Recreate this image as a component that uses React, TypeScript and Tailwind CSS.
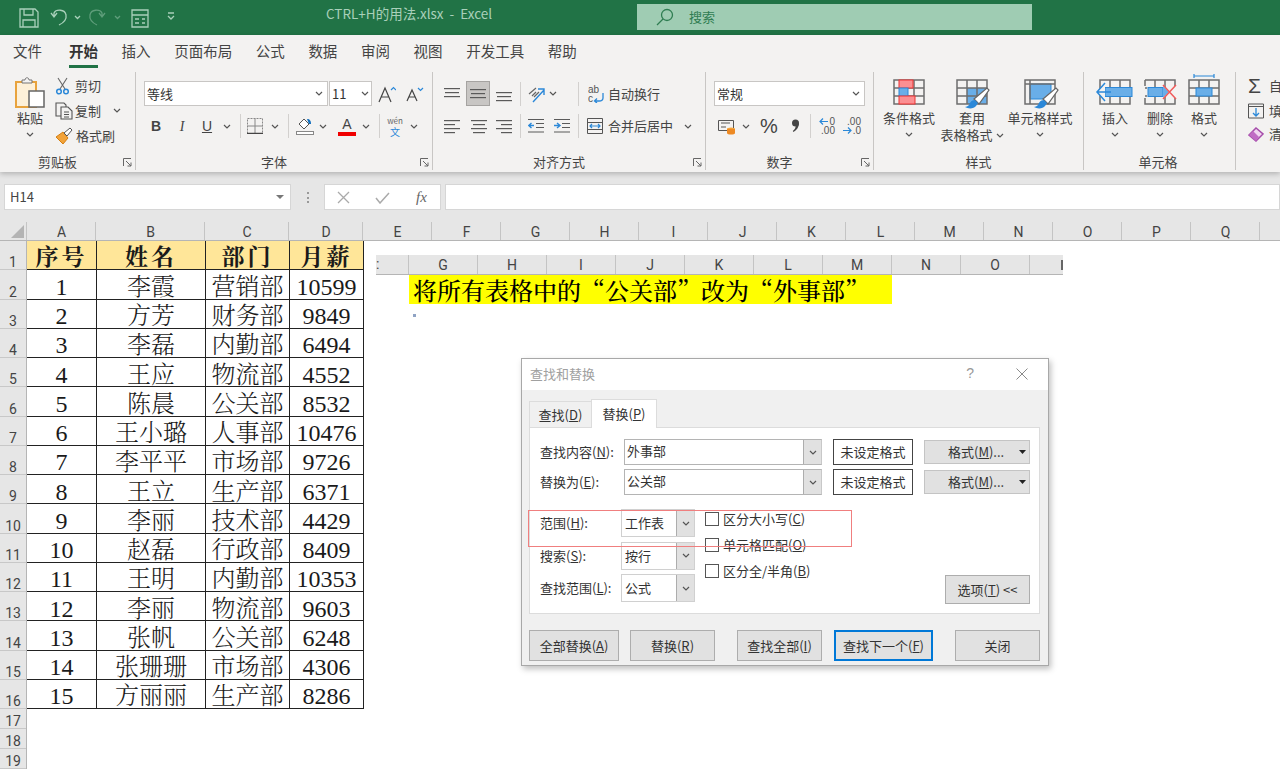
import React from 'react';

const tabs = ['开始', '插入', '页面布局', '公式', '数据', '审阅', '视图', '开发工具', '帮助'];

const people = [
  ['1', '李霞', '营销部', '10599'],
  ['2', '方芳', '财务部', '9849'],
  ['3', '李磊', '内勤部', '6494'],
  ['4', '王应', '物流部', '4552'],
  ['5', '陈晨', '公关部', '8532'],
  ['6', '王小璐', '人事部', '10476'],
  ['7', '李平平', '市场部', '9726'],
  ['8', '王立', '生产部', '6371'],
  ['9', '李丽', '技术部', '4429'],
  ['10', '赵磊', '行政部', '8409'],
  ['11', '王明', '内勤部', '10353'],
  ['12', '李丽', '物流部', '9603'],
  ['13', '张帆', '公关部', '6248'],
  ['14', '张珊珊', '市场部', '4306'],
  ['15', '方丽丽', '生产部', '8286'],
];

const sheetCols = ['E', 'F', 'G', 'H', 'I', 'J', 'K', 'L', 'M', 'N', 'O', 'P', 'Q', 'R'];
const pastedCols = ['G', 'H', 'I', 'J', 'K', 'L', 'M', 'N', 'O'];

const Chev = ({ className = '' }: { className?: string }) => (
  <svg width="8" height="5" viewBox="0 0 8 5" className={`shrink-0 ${className}`}>
    <path d="M1 1l3 3 3-3" fill="none" stroke="#555" strokeWidth="1.2" />
  </svg>
);

const Sep = ({ className = '' }: { className?: string }) => (
  <div className={`w-px h-[24px] bg-[#d2d0ce] shrink-0 ${className}`} />
);

const Launcher = () => (
  <svg width="9" height="9" viewBox="0 0 9 9" className="absolute right-[3px] top-[4px]">
    <path d="M.5 8V.5H8M3 3l5 5M8 4.5V8H4.5" fill="none" stroke="#666" />
  </svg>
);

const Lines = ({ rows, className = '' }: { rows: [number, number, number][]; className?: string }) => (
  <svg width="16" height="16" viewBox="0 0 16 16" className={`shrink-0 ${className}`}>
    {rows.map(([x, y, w], i) => (
      <rect key={i} x={x} y={y} width={w} height="1.2" fill="#5a5a5a" />
    ))}
  </svg>
);

const Indent = ({ flip, className = '' }: { flip?: boolean; className?: string }) => (
  <svg width="16" height="16" viewBox="0 0 16 16" className={`shrink-0 ${className}`}>
    <path d="M0 1.5h16M8 5.5h8M8 9.5h8M0 14h16" stroke="#5a5a5a" strokeWidth="1.2" />
    <path d={flip ? 'M0 7.5h5M3 5l3 2.500-3 2.500' : 'M6 7.500H1M3.500 5L.8 7.500 3.500 10'} fill="none" stroke="#2b88d8" strokeWidth="1.4" />
  </svg>
);

const GridBase = ({ children, w = 32 }: { children?: React.ReactNode; w?: number }) => (
  <svg width={w} height="32" viewBox="0 0 32 32" className="shrink-0 overflow-visible">
    {children}
  </svg>
);

const GridLines = () => (
  <path d="M1 1h30v24H1zM1 9h30M1 17h30M11 1v24M21 1v24" fill="none" stroke="#6e6e6e" strokeWidth="1.500" />
);

const Brush = ({ x = 0, y = 0 }: { x?: number; y?: number }) => (
  <g transform={`translate(${x} ${y})`}>
    <path d="M14 12L27 1l2 2-10 14z" fill="#fff" stroke="#666" strokeWidth="1.200" />
    <path d="M15 13c-4 0-5 3-6 5-1 1-3 2-4 2 3 2 9 2 11-1 1.500-2 2-3 2-3z" fill="#2b88d8" />
  </g>
);

const Small = ({ children, className = '' }: { children: React.ReactNode; className?: string }) => (
  <span className={`block text-[13px] leading-[16px] text-[#444] whitespace-nowrap ${className}`}>{children}</span>
);

const GroupLabel = ({ children, className = '' }: { children: React.ReactNode; className?: string }) => (
  <div className={`relative mt-auto h-[16px] text-center text-[13px] leading-[16px] text-[#444] ${className}`}>{children}</div>
);

const BigButton = ({ icon, lines, className = '' }: { icon: React.ReactNode; lines: React.ReactNode; className?: string }) => (
  <div className={`flex flex-col items-center pt-[7px] shrink-0 ${className}`}>
    <div className="h-[32px] mb-[-1px] flex items-center justify-center">{icon}</div>
    {lines}
  </div>
);

const Combo = ({ text, w }: { text: string; w: string }) => (
  <div className={`${w} h-[28px] flex shrink-0 bg-white border border-[#d0d0d0]`}>
    <div className="flex-1 pl-[3px] text-[13px] leading-[26px] text-[#333]">{text}</div>
    <div className="w-[18px] bg-[#e1e1e1] border-l border-[#adadad] flex items-center justify-center">
      <Chev />
    </div>
  </div>
);

const WideInput = ({ text }: { text: string }) => (
  <div className="w-[198px] h-[26px] flex shrink-0 bg-white border border-[#b4b4b4] border-r-[#c8c8c8]">
    <div className="flex-1 pl-[2px] text-[13px] leading-[22px] text-[#333]">{text}</div>
    <div className="w-[18px] bg-[#e1e1e1] border-l border-[#adadad] flex items-center justify-center">
      <Chev />
    </div>
  </div>
);

const DlgButton = ({ children, className = '' }: { children: React.ReactNode; className?: string }) => (
  <div className={`h-[31px] flex items-center justify-center bg-[#e1e1e1] border border-[#adadad] text-[13px] text-[#333] shrink-0 whitespace-pre ${className}`}>
    {children}
  </div>
);

const Check = ({ children }: { children: React.ReactNode }) => (
  <div className="h-[14px] flex items-center">
    <div className="w-[14px] h-[14px] bg-white border border-[#555] shrink-0" />
    <span className="ml-[4px] text-[13px] text-[#333] whitespace-nowrap">{children}</span>
  </div>
);

const FormatRow = ({ label, value, className = '' }: { label: React.ReactNode; value: string; className?: string }) => (
  <div className={`flex items-center h-[26px] ${className}`}>
    <div className="w-[84px] text-[13px] text-[#333] whitespace-nowrap">{label}</div>
    <WideInput text={value} />
    <div className="ml-[11px] w-[80px] h-[26px] flex items-center justify-center bg-white border border-[#444] text-[13px] text-[#333]">未设定格式</div>
    <div className="ml-[11px] w-[106px] h-[24px] flex items-center bg-[#e1e1e1] border border-[#c4c4c4] text-[13px] text-[#333]">
      <span className="ml-[23px]">格式(<u>M</u>)...</span>
      <svg width="7" height="4" viewBox="0 0 7 4" className="ml-auto mr-[3px]"><path d="M0 0h7L3.500 4z" fill="#222" /></svg>
    </div>
  </div>
);

const App: React.FC = () => {
  return (
    <div lang="zh-CN" className="relative w-[1280px] h-[772px] overflow-hidden bg-white font-['Noto_Sans_CJK_SC','Liberation_Sans',sans-serif]">
      {/* title bar */}
      <div className="h-[35px] bg-[#217346] flex items-center relative">
        <svg width="200" height="24" viewBox="0 0 200 24" className="ml-[18px] shrink-0" fill="none" stroke="#a9d0ba" strokeWidth="1.300">
          <path d="M2 3h15l3 3v15H2zM6 3v6h9V3M5 21v-7h12v7" />
          <path d="M37 8l-3 4-3-4M34 12V8c2-4 11-4 12 2 1 5-3 8-7 10" transform="translate(2 -1)" />
          <path d="M57 10l2.500 2.500L62 10" />
          <path d="M96 8l3 4 3-4M99 12V8c-2-4-11-4-12 2-1 5 3 8 7 10" transform="translate(-15 -1)" opacity=".45" />
          <path d="M97 10l2.500 2.500L102 10" opacity=".45" />
          <path d="M114 4h16v17h-16zM114 9h16M117 13h4M124 13h3M117 17h4M124 17h3" />
          <path d="M150 7h6M150 10l3 3 3-3" />
        </svg>
        <div className="absolute left-[326px] top-[5px] text-[13.500px] leading-[17px] text-[#a9d0ba] whitespace-pre">CTRL+H的用法.xlsx  -  Excel</div>
        <div className="absolute left-[637px] top-[4px] w-[395px] h-[26px] bg-[#9fccb3] flex items-center">
          <svg width="18" height="18" viewBox="0 0 18 18" className="ml-[19px]" fill="none" stroke="#2f7d52" strokeWidth="1.300">
            <circle cx="11" cy="7" r="5.500" />
            <path d="M7 11l-6 6" />
          </svg>
          <span className="ml-[15px] text-[13px] text-[#2f7d52]">搜索</span>
        </div>
      </div>

      {/* ribbon */}
      <div className="relative z-10 bg-[#f3f2f1] shadow-[0_2px_5px_rgba(0,0,0,0.22)] h-[137px]">
        <div className="h-[32px] flex items-center pl-[13px] text-[14.500px] text-[#444]">
          <span>文件</span>
          {tabs.map((t) => (
            <span
              key={t}
              className={
                t === '开始'
                  ? 'ml-[27px] relative font-bold text-[#333] after:absolute after:left-0 after:right-0 after:bottom-[-6px] after:h-[3px] after:bg-[#217346]'
                  : 'ml-[23.600px]'
              }
            >
              {t}
            </span>
          ))}
        </div>

        <div className="flex pt-[5px] h-[105px]">
          {/* clipboard */}
          <div className="w-[136px] h-[98px] border-r border-[#c8c6c4] flex flex-col shrink-0">
            <div className="flex pl-[13px]">
              <div className="w-[34px] flex flex-col items-center pt-[5px]">
                <svg width="32" height="33" viewBox="0 0 32 33" className="shrink-0">
                  <path d="M2 5h20v25H2z" fill="#fdf0d8" stroke="#e8a33d" strokeWidth="2" />
                  <path d="M8 6V3h3c0-3 4-3 4 0h3v3z" fill="#f3f2f1" stroke="#777" />
                  <path d="M15 14h15v16H15z" fill="#fff" stroke="#666" strokeWidth="1.500" />
                </svg>
                <Small>粘贴</Small>
                <Chev className="mt-[6px]" />
              </div>
              <div className="ml-[8px] flex flex-col pt-[1px]">
                <div className="h-[25px] flex items-center">
                  <svg width="16" height="18" viewBox="0 0 16 18" fill="none" stroke="#666" strokeWidth="1.100">
                    <path d="M3 1l7 11M12 1L5 12" />
                    <circle cx="4" cy="14.500" r="2.300" stroke="#2b88d8" strokeWidth="1.500" />
                    <circle cx="11" cy="14.500" r="2.300" stroke="#2b88d8" strokeWidth="1.500" />
                  </svg>
                  <Small className="ml-[4px]">剪切</Small>
                </div>
                <div className="h-[25px] flex items-center">
                  <svg width="18" height="18" viewBox="0 0 18 18" fill="none" stroke="#555" strokeWidth="1.100">
                    <path d="M1 1h8l2 2v11H1z" />
                    <path d="M6 5h7l4 4v8H6z" fill="#f3f2f1" />
                    <path d="M9 10h5M9 12.500h5M9 15h5" />
                  </svg>
                  <Small className="ml-[2px]">复制</Small>
                  <Chev className="ml-[12px]" />
                </div>
                <div className="h-[25px] flex items-center">
                  <svg width="18" height="18" viewBox="0 0 18 18">
                    <path d="M1 10l7-5 5 6-5 6z" fill="#f2a33a" stroke="#d47f12" />
                    <path d="M9 6l6-5 2 2-5 6z" fill="#fff" stroke="#555" />
                  </svg>
                  <Small className="ml-[3px]">格式刷</Small>
                </div>
              </div>
            </div>
            <GroupLabel className="pr-[20px]">剪贴板<Launcher /></GroupLabel>
          </div>

          {/* font */}
          <div className="w-[297px] h-[98px] border-r border-[#c8c6c4] flex flex-col shrink-0">
            <div className="pl-[8px] pt-[9px]">
              <div className="flex items-center h-[25px]">
                <div className="w-[184px] h-[25px] bg-white border border-[#c8c6c4] flex items-center px-[2px] text-[13px] text-[#333]">
                  等线<Chev className="ml-auto mr-[2px]" />
                </div>
                <div className="ml-px w-[43px] h-[25px] bg-white border border-[#c8c6c4] flex items-center pl-[2px] text-[13px] text-[#333]">
                  11<Chev className="ml-auto mr-[2px]" />
                </div>
                <svg width="18" height="18" viewBox="0 0 18 18" className="ml-[6px]" fill="none" strokeWidth="1.200">
                  <path d="M1 17L7 3l6 14M3.500 12h7" stroke="#444" />
                  <path d="M13 5l2.500-2.500L18 5" stroke="#2b88d8" />
                </svg>
                <svg width="18" height="16" viewBox="0 0 18 16" className="ml-[10px]" fill="none" strokeWidth="1.200">
                  <path d="M1 15L6 4l5 11M3 11h6" stroke="#444" />
                  <path d="M12 2l2.500 2.500L17 2" stroke="#2b88d8" />
                </svg>
              </div>
              <div className="flex items-center h-[24px] mt-[8px]">
                <span className="ml-[5px] w-[14px] text-center text-[14px] font-bold text-[#444] font-['Liberation_Sans',sans-serif]">B</span>
                <span className="ml-[12px] w-[14px] text-center text-[14px] italic text-[#444] font-['Liberation_Serif',serif]">I</span>
                <span className="ml-[11px] w-[14px] text-center text-[14px] underline text-[#444] font-['Liberation_Sans',sans-serif]">U</span>
                <Chev className="ml-[9px]" />
                <Sep className="ml-[9px]" />
                <svg width="16" height="16" viewBox="0 0 16 16" className="ml-[6px] shrink-0" fill="none" stroke="#888">
                  <path d="M.5.500h15v15H.500z" strokeDasharray="2 1" />
                  <path d="M8 .500v15M.5 8h15" />
                  <path d="M0 15.500h16" stroke="#444" strokeWidth="1.500" />
                </svg>
                <Chev className="ml-[8px]" />
                <Sep className="ml-[9px]" />
                <svg width="18" height="18" viewBox="0 0 18 18" className="ml-[7px] shrink-0">
                  <path d="M3 7l5-5 5 5-5 5z" fill="#fff" stroke="#555" />
                  <path d="M11 2c3 0 4 2 4 5l-2 0z" fill="#106ebe" />
                  <rect x=".5" y="14.500" width="17" height="3" fill="#fff" stroke="#888" />
                </svg>
                <Chev className="ml-[5px]" />
                <div className="ml-[11px] w-[18px] flex flex-col items-center leading-none">
                  <span className="text-[14px] leading-[14px] text-[#444] font-['Liberation_Sans',sans-serif]">A</span>
                  <div className="w-[18px] h-[4px] bg-[#f00000] mt-[1px]" />
                </div>
                <Chev className="ml-[6px]" />
                <Sep className="ml-[9px]" />
                <div className="ml-[6px] w-[18px] flex flex-col items-center">
                  <span className="text-[8px] leading-[11px] text-[#666]">wén</span>
                  <span className="text-[10px] leading-[11px] text-[#2b88d8]">文</span>
                </div>
                <Chev className="ml-[6px]" />
              </div>
            </div>
            <GroupLabel className="pr-[20px]">字体<Launcher /></GroupLabel>
          </div>

          {/* alignment */}
          <div className="w-[273px] h-[98px] border-r border-[#c8c6c4] flex flex-col shrink-0">
            <div className="pt-[9px]">
              <div className="flex items-center h-[25px]">
                <Lines className="ml-[11px]" rows={[[0, 2, 16], [1, 6, 14], [0, 10, 16]]} />
                <div className="ml-[6px] w-[24px] h-[25px] bg-[#c8c6c4] border border-[#a5a3a1] flex items-center justify-center shrink-0">
                  <Lines rows={[[0, 3, 16], [1, 7, 14], [0, 11, 16]]} />
                </div>
                <Lines className="ml-[6px]" rows={[[0, 6, 16], [1, 10, 14], [0, 14, 16]]} />
                <Sep className="ml-[8px]" />
                <svg width="18" height="18" viewBox="0 0 18 18" className="ml-[7px] shrink-0" fill="none">
                  <path d="M1 9l7-6M4 11l4-4M6 12l5-5" stroke="#666" strokeWidth="1.200" />
                  <path d="M5 17L16 5M10 4h6v6" stroke="#2b88d8" strokeWidth="1.400" />
                </svg>
                <Chev className="ml-[3px]" />
                <Sep className="ml-[21px]" />
                <svg width="16" height="18" viewBox="0 0 16 18" className="ml-[9px] shrink-0" fill="none">
                  <text x="0" y="8" fontSize="10" fill="#555" fontFamily="Liberation Sans">ab</text>
                  <text x="0" y="17" fontSize="10" fill="#555" fontFamily="Liberation Sans">c</text>
                  <path d="M15 8v5c0 2-2 3-4 3H7M9 13.500l-2.500 2.500L9 18" stroke="#2b88d8" strokeWidth="1.300" />
                </svg>
                <Small className="ml-[4px]">自动换行</Small>
              </div>
              <div className="flex items-center h-[24px] mt-[8px]">
                <Lines className="ml-[11px]" rows={[[0, 2, 16], [0, 6, 11], [0, 10, 16], [0, 14, 11]]} />
                <Lines className="ml-[11px]" rows={[[0, 2, 16], [2, 6, 12], [0, 10, 16], [2, 14, 12]]} />
                <Lines className="ml-[9px]" rows={[[0, 2, 16], [5, 6, 11], [0, 10, 16], [5, 14, 11]]} />
                <Sep className="ml-[8px]" />
                <Indent className="ml-[7px]" />
                <Indent flip className="ml-[10px]" />
                <Sep className="ml-[8px]" />
                <svg width="16" height="16" viewBox="0 0 16 16" className="ml-[8px] shrink-0" fill="none">
                  <path d="M.5.500h15v15H.500zM.5 4.500h15M.5 11.500h15" stroke="#555" />
                  <path d="M3 8h10M5 6L3 8l2 2M11 6l2 2-2 2" stroke="#2b88d8" strokeWidth="1.200" />
                </svg>
                <Small className="ml-[5px]">合并后居中</Small>
                <Chev className="ml-[11px]" />
              </div>
            </div>
            <GroupLabel className="pr-[20px]">对齐方式<Launcher /></GroupLabel>
          </div>

          {/* number */}
          <div className="w-[168px] h-[98px] border-r border-[#c8c6c4] flex flex-col shrink-0">
            <div className="pt-[9px]">
              <div className="ml-[8px] w-[151px] h-[25px] bg-white border border-[#c8c6c4] flex items-center px-[2px] text-[13px] text-[#333]">
                常规<Chev className="ml-auto mr-[2px]" />
              </div>
              <div className="flex items-center h-[24px] mt-[8px]">
                <svg width="18" height="18" viewBox="0 0 18 18" className="ml-[12px] shrink-0" fill="none">
                  <path d="M.5 3.500h15v10H.500z" stroke="#555" />
                  <path d="M3 6h9M3 10h5" stroke="#555" />
                  <ellipse cx="13" cy="12" rx="4" ry="1.500" fill="#f2a33a" />
                  <path d="M9 12h8v4c0 2-8 2-8 0z" fill="#ed8a24" />
                </svg>
                <Chev className="ml-[6px]" />
                <span className="ml-[10px] w-[18px] text-center text-[20px] leading-none text-[#444] font-['Liberation_Sans',sans-serif]">%</span>
                <svg width="12" height="16" viewBox="0 0 12 16" className="ml-[11px] shrink-0">
                  <circle cx="6.500" cy="5" r="3.500" fill="#444" />
                  <path d="M10 5c0 4-2 7-5.500 9l-.7-1c2-1.500 3-3.500 3-6z" fill="#444" />
                </svg>
                <Sep className="ml-[9px]" />
                <div className="ml-[6px] w-[18px] flex flex-col items-end text-[10px] leading-[9px] text-[#555] font-['Liberation_Sans',sans-serif]">
                  <div className="flex items-center">
                    <svg width="9" height="7" viewBox="0 0 9 7" fill="none" className="mr-[1px]"><path d="M9 3.500H1M4 .5l-3 3 3 3" stroke="#2b88d8" strokeWidth="1.200" /></svg>
                    <span>0</span>
                  </div>
                  <span>.00</span>
                </div>
                <div className="ml-[8px] w-[18px] flex flex-col items-end text-[10px] leading-[9px] text-[#555] font-['Liberation_Sans',sans-serif]">
                  <span>.00</span>
                  <div className="flex items-center">
                    <svg width="9" height="7" viewBox="0 0 9 7" fill="none" className="mr-[1px]"><path d="M0 3.500h8M5 .5l3 3-3 3" stroke="#2b88d8" strokeWidth="1.200" /></svg>
                    <span>.0</span>
                  </div>
                </div>
              </div>
            </div>
            <GroupLabel className="pr-[20px]">数字<Launcher /></GroupLabel>
          </div>

          {/* styles */}
          <div className="w-[210px] h-[98px] border-r border-[#c8c6c4] flex flex-col shrink-0">
            <div className="flex">
              <BigButton
                className="ml-[7px] w-[56px]"
                icon={
                  <GridBase>
                    <GridLines />
                    <rect x="6" y="1" width="14" height="8" fill="#fb8f92" stroke="#e33" />
                    <rect x="6" y="9" width="9" height="8" fill="#69aee8" stroke="#2b88d8" />
                    <rect x="6" y="17" width="16" height="8" fill="#fb8f92" stroke="#e33" />
                  </GridBase>
                }
                lines={<><Small>条件格式</Small><Chev className="mt-[6px]" /></>}
              />
              <BigButton
                className="ml-[2px] w-[66px]"
                icon={
                  <GridBase>
                    <rect x="11" y="9" width="20" height="16" fill="#69aee8" />
                    <GridLines />
                    <Brush x="4" y="8" />
                  </GridBase>
                }
                lines={
                  <>
                    <Small>套用</Small>
                    <div className="flex items-center mt-px">
                      <Small>表格格式</Small>
                      <Chev className="ml-[3px]" />
                    </div>
                  </>
                }
              />
              <BigButton
                className="ml-[2px] w-[66px]"
                icon={
                  <GridBase>
                    <rect x="6" y="5" width="21" height="15" fill="#69aee8" stroke="#2b88d8" />
                    <path d="M1 1h30v24H1zM1 5h30M6 1v24" fill="none" stroke="#6e6e6e" strokeWidth="1.500" />
                    <Brush x="5" y="8" />
                  </GridBase>
                }
                lines={<><Small>单元格样式</Small><Chev className="mt-[6px]" /></>}
              />
            </div>
            <GroupLabel>样式</GroupLabel>
          </div>

          {/* cells */}
          <div className="w-[152px] h-[98px] border-r border-[#c8c6c4] flex flex-col shrink-0">
            <div className="flex">
              <BigButton
                className="ml-[9px] w-[44px]"
                icon={
                  <GridBase>
                    <GridLines />
                    <rect x="6" y="8.500" width="27" height="9" fill="#69aee8" stroke="#2b88d8" />
                    <path d="M6 4l-8 9 8 9M-2 13h14" fill="#f3f2f1" stroke="#2b88d8" strokeWidth="1.500" />
                  </GridBase>
                }
                lines={<><Small>插入</Small><Chev className="mt-[6px]" /></>}
              />
              <BigButton
                className="ml-px w-[44px]"
                icon={
                  <GridBase>
                    <path d="M1 1h30v6M31 19v6H1v-6M1 7V1M1 9h2M1 17h2M11 1v7M21 1v7M11 18v7M21 18v7" fill="none" stroke="#6e6e6e" strokeWidth="1.500" />
                    <rect x="4" y="8.500" width="15" height="9" fill="#69aee8" stroke="#2b88d8" />
                    <path d="M19 7l6 6-6 6z" fill="#69aee8" />
                    <path d="M19 6l13 14M32 6L19 20" stroke="#f05a5a" strokeWidth="1.500" />
                  </GridBase>
                }
                lines={<><Small>删除</Small><Chev className="mt-[6px]" /></>}
              />
              <BigButton
                className="w-[44px]"
                icon={
                  <GridBase>
                    <path d="M6 -3h20M6 -5v4M26 -5v4" stroke="#2b88d8" strokeWidth="1.200" fill="none" />
                    <GridLines />
                    <rect x="8" y="9" width="16" height="8" fill="#69aee8" stroke="#2b88d8" />
                  </GridBase>
                }
                lines={<><Small>格式</Small><Chev className="mt-[6px]" /></>}
              />
            </div>
            <GroupLabel className="pr-[3px]">单元格</GroupLabel>
          </div>

          {/* editing */}
          <div className="flex flex-col pl-[12px] shrink-0">
            <div className="h-[25px] flex items-center mt-[1px]">
              <span className="w-[16px] text-[21px] leading-none text-[#444] font-['Liberation_Sans',sans-serif]">Σ</span>
              <Small className="ml-[5px]">自</Small>
            </div>
            <div className="h-[25px] flex items-center">
              <svg width="16" height="16" viewBox="0 0 16 16" fill="none" className="shrink-0">
                <path d="M.5 1h15v14H.500zM.5 3.500h15" stroke="#555" />
                <path d="M8 5v8M5 10l3 3 3-3" stroke="#2b88d8" strokeWidth="1.300" />
              </svg>
              <Small className="ml-[5px]">填</Small>
            </div>
            <div className="h-[22px] flex items-center">
              <svg width="16" height="16" viewBox="0 0 16 16" className="shrink-0">
                <path d="M1 9l7-7 7 6-7 7z" fill="#f0d6f0" stroke="#a64dab" strokeWidth="1.500" />
                <path d="M1 9l4-4 6 6-3 4z" fill="#c06cc4" />
              </svg>
              <Small className="ml-[5px]">清</Small>
            </div>
          </div>
        </div>
      </div>

      {/* formula bar */}
      <div className="h-[50px] bg-[#e6e6e6] pt-[12px] flex items-start">
        <div className="ml-[4px] w-[287px] h-[26px] bg-white border border-[#d6d6d6] flex items-center pl-[5px] text-[13px] text-[#444]">
          H14
          <svg width="8" height="4" viewBox="0 0 8 4" className="ml-auto mr-[6px]"><path d="M0 0h8L4 4z" fill="#777" /></svg>
        </div>
        <div className="ml-[16px] w-[2px] h-[11px] mt-[8px] border-l-2 border-dotted border-[#999]" />
        <div className="ml-[15px] w-[117px] h-[26px] bg-white border border-[#d6d6d6] flex items-center shrink-0">
          <svg width="13" height="13" viewBox="0 0 13 13" className="ml-[12px]"><path d="M1 1l11 11M12 1L1 12" stroke="#aaa" strokeWidth="1.300" /></svg>
          <svg width="15" height="13" viewBox="0 0 15 13" className="ml-[25px]"><path d="M1 7l4 5 9-10" fill="none" stroke="#aaa" strokeWidth="1.500" /></svg>
          <span className="ml-[26px] text-[15px] italic text-[#666] font-['Liberation_Serif',serif]">fx</span>
        </div>
        <div className="ml-[4px] flex-1 h-[26px] bg-white border border-[#d6d6d6]" />
      </div>

      {/* column headers */}
      <div className="h-[19px] flex bg-[#e6e6e6] border-b border-[#b5b5b5] text-[14px] leading-[21px] text-[#444] font-['Roboto',sans-serif]">
        <div className="w-[27px] shrink-0 border-r border-[#c4c4c4] relative">
          <svg width="13" height="13" viewBox="0 0 13 13" className="absolute left-[11px] top-[3px]"><path d="M13 0v13H0z" fill="#b4b4b4" /></svg>
        </div>
        <div className="w-[69px] shrink-0 pl-px text-center border-r border-[#c4c4c4]">A</div>
        <div className="w-[109px] shrink-0 pl-px text-center border-r border-[#c4c4c4]">B</div>
        <div className="w-[84px] shrink-0 pl-px text-center border-r border-[#c4c4c4]">C</div>
        <div className="w-[74px] shrink-0 pl-px text-center border-r border-[#c4c4c4]">D</div>
        {sheetCols.map((c) => (
          <div key={c} className="w-[69px] shrink-0 pl-px text-center border-r border-[#c4c4c4]">{c}</div>
        ))}
      </div>

      {/* sheet */}
      <div className="flex">
        <div className="w-[27px] shrink-0 bg-[#e6e6e6] border-r border-[#b5b5b5] text-[14px] text-[#444] font-['Roboto',sans-serif]">
          {Array.from({ length: 16 }, (_, i) => (
            <div key={i} className="h-[29.25px] flex items-end justify-center leading-[14px] border-b border-[#c8c8c8]">{i + 1}</div>
          ))}
          {[17, 18, 19].map((n) => (
            <div key={n} className="h-[20px] flex items-end justify-center leading-[14px] border-b border-[#c8c8c8]">{n}</div>
          ))}
        </div>

        <div className="w-[337px] shrink-0 grid grid-cols-[70px_109px_84px_74px] auto-rows-[29.25px] text-[#1a1a1a] leading-none font-['Liberation_Serif','Noto_Serif_CJK_SC','Noto_Sans_CJK_SC',serif]">
          {['序号', '姓名', '部门', '月薪'].map((h) => (
            <div key={h} className="bg-[#ffe699] font-bold tracking-[3px] pt-[5px] flex items-center justify-center border-r border-b border-[#222] text-[23px]">{h}</div>
          ))}
          {people.map((row) =>
            row.map((v, j) => (
              <div key={`${row[0]}-${j}`} className="pt-[5px] flex items-center justify-center border-r border-b border-[#222] font-light whitespace-nowrap text-[24px]">{v}</div>
            ))
          )}
        </div>

        {/* pasted picture */}
        <div className="ml-[12px] pt-[14px] shrink-0">
          <div className="w-[687px] h-[20px] flex bg-[#e6e6e6] border-b border-[#b5b5b5] text-[14px] leading-[21px] text-[#444] font-['Roboto',sans-serif]">
            <div className="w-[33px] shrink-0 border-r border-[#c4c4c4] leading-[18px]">:</div>
            {pastedCols.map((c) => (
              <div key={c} className="w-[69px] shrink-0 text-center border-r border-[#c4c4c4]">{c}</div>
            ))}
            <div className="ml-auto w-[2px] h-[10px] mt-[5px] bg-[#666]" />
          </div>
          <div className="ml-[33px] w-[483px] h-[29px] bg-[#ffff00] pl-[4px] flex items-center text-[24px] leading-none font-medium text-black whitespace-nowrap font-['Noto_Serif_CJK_SC','Noto_Sans_CJK_SC',sans-serif]">
            将所有表格中的“公关部”改为“外事部”
          </div>
          <div className="ml-[37px] mt-[10px] w-[3px] h-[3px] bg-[#8fa3c4]" />
        </div>
      </div>

      {/* find and replace dialog */}
      <div className="absolute left-[521px] top-[358px] w-[528px] h-[308px] bg-[#f0f0f0] border border-[#a8a8a8] shadow-[2px_3px_6px_rgba(0,0,0,0.25)]">
        <div className="h-[31px] bg-white flex items-center pl-[8px] pb-[2px]">
          <span className="text-[13px] text-[#a0a0a0]">查找和替换</span>
          <span className="ml-auto text-[14px] text-[#999] font-['Liberation_Sans',sans-serif]">?</span>
          <svg width="12" height="12" viewBox="0 0 12 12" className="ml-[42px] mr-[20px]"><path d="M.5.500l11 11M11.500.500l-11 11" stroke="#8a8a8a" /></svg>
        </div>
        <div className="px-[7px]">
          <div className="h-[37px] flex items-end">
            <div className="w-[62px] h-[26px] bg-[#f0f0f0] border-t border-l border-[#dcdcdc] flex items-center justify-center text-[13px] text-[#333]">查找(<u>D</u>)</div>
            <div className="w-[66px] h-[29px] bg-white border-t border-l border-r border-[#dcdcdc] mb-[-1px] relative z-10 flex items-center justify-center text-[13px] text-[#333]">替换(<u>P</u>)</div>
          </div>
          <div className="w-[511px] h-[187px] bg-white border border-[#dcdcdc] pl-[10px] pt-[11px]">
            <FormatRow label={<>查找内容(<u>N</u>):</>} value="外事部" />
            <FormatRow className="mt-[4px]" label={<>替换为(<u>E</u>):</>} value="公关部" />
            <div className="flex items-start mt-[14px]">
              <div className="w-[81px] shrink-0 flex flex-col gap-[4.500px] text-[13px] text-[#333] whitespace-nowrap">
                <div className="h-[28px] leading-[28px]">范围(<u>H</u>):</div>
                <div className="h-[28px] leading-[28px]">搜索(<u>S</u>):</div>
                <div className="h-[28px] leading-[28px]">查找范围(<u>L</u>):</div>
              </div>
              <div className="flex flex-col gap-[4.500px] shrink-0">
                <Combo w="w-[74px]" text="工作表" />
                <Combo w="w-[74px]" text="按行" />
                <Combo w="w-[74px]" text="公式" />
              </div>
              <div className="ml-[10px] pt-[3px] w-[226px] flex flex-col gap-[12px] shrink-0">
                <Check>区分大小写(<u>C</u>)</Check>
                <Check>单元格匹配(<u>O</u>)</Check>
                <Check>区分全/半角(<u>B</u>)</Check>
              </div>
              <DlgButton className="ml-[14px] mt-[66px] w-[85px] !h-[29px]">选项(<u>T</u>) &lt;&lt;</DlgButton>
            </div>
          </div>
          <div className="flex mt-[16px]">
            <DlgButton className="w-[90px]">全部替换(<u>A</u>)</DlgButton>
            <DlgButton className="ml-[11px] w-[85px]">替换(<u>R</u>)</DlgButton>
            <DlgButton className="ml-[22px] w-[85px]">查找全部(<u>I</u>)</DlgButton>
            <DlgButton className="ml-[12px] w-[99px] !border-2 !border-[#0078d7]">查找下一个(<u>F</u>)</DlgButton>
            <DlgButton className="ml-[22px] w-[85px]">关闭</DlgButton>
          </div>
        </div>
        <div className="absolute left-[6px] top-[151px] w-[324px] h-[37px] border border-[#f07f7f]" />
      </div>
    </div>
  );
};

export default App;
